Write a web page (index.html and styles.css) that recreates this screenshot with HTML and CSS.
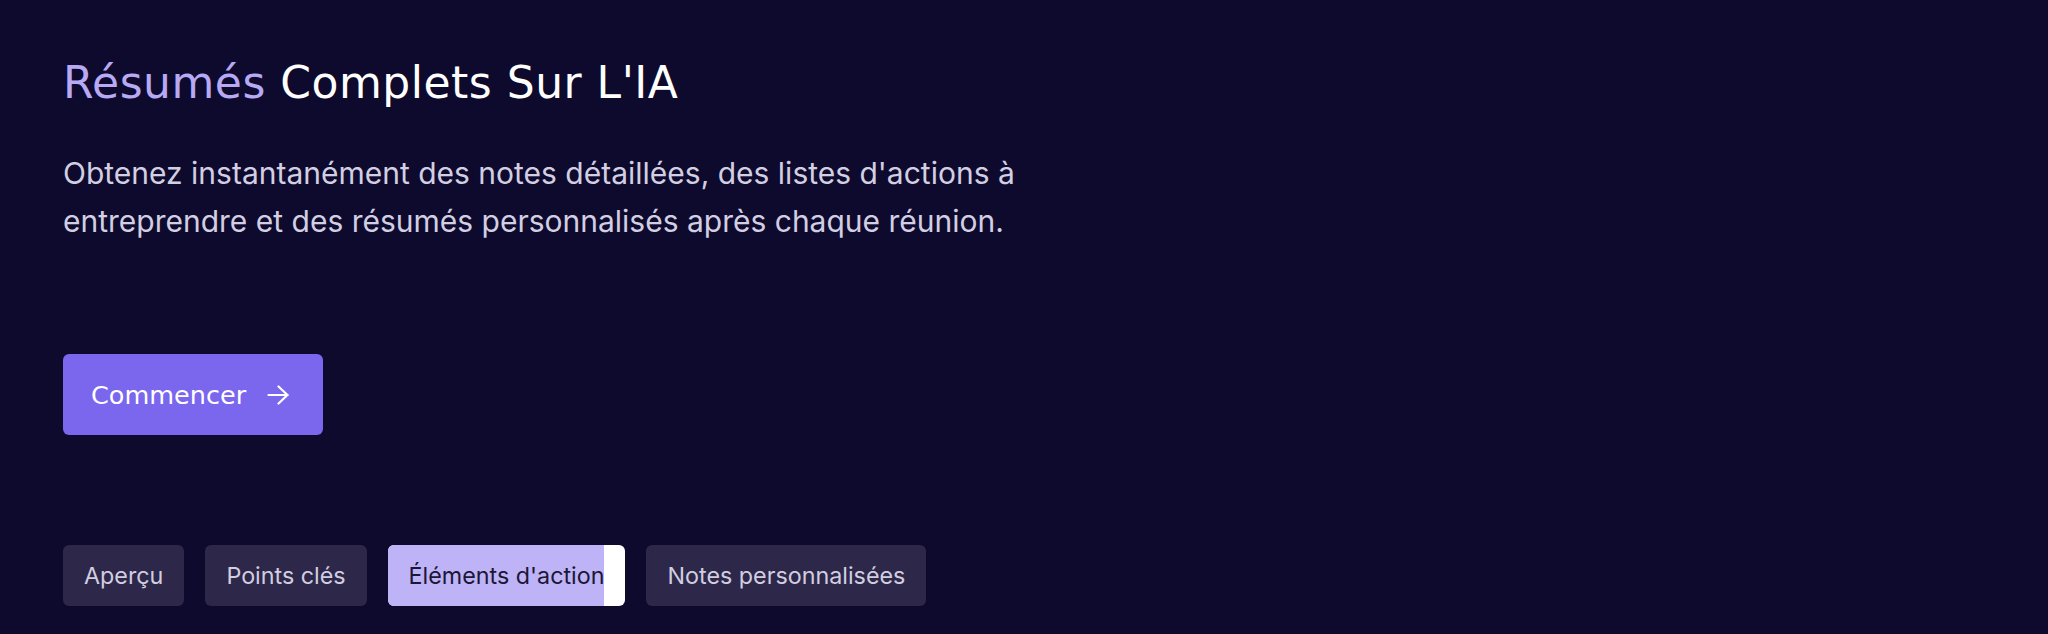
FILE: index.html
```html
<!DOCTYPE html>
<html lang="fr">
<head>
  <meta charset="UTF-8" />
  <title>Résumés Complets Sur L'IA</title>
  <meta name="viewport" content="width=device-width, initial-scale=1.0" />
  <link rel="stylesheet" href="styles.css">
</head>
<body>

  <section class="hero">
    <h1 class="hero-title"><span class="accent">Résumés</span> Complets Sur L'IA</h1>
    <p class="hero-text">Obtenez instantanément des notes détaillées, des listes d'actions à entreprendre et des résumés personnalisés après chaque réunion.</p>

    <a class="start-btn" href="#">
      Commencer
      <svg class="start-arrow" viewBox="0 0 22 20" width="22" height="20" fill="none" stroke="currentColor" stroke-width="2.2" stroke-linecap="round" stroke-linejoin="round">
        <path d="M1.5 10h19" />
        <path d="M11.5 1.5l9 8.5-9 8.5" />
      </svg>
    </a>

    <div class="tabs">
      <button class="tab">Aperçu</button>
      <button class="tab">Points clés</button>
      <button class="tab active"><span class="tab-fill" style="width: 91%"></span><span class="tab-label">Éléments d'action</span></button>
      <button class="tab">Notes personnalisées</button>
    </div>
  </section>

</body>
</html>
```

FILE: styles.css
```css
body {
  margin: 0;
  background-color: #0e0a2d;
  color: white;
  font-family: Inter, "Noto Sans", sans-serif;
  height: 634px;
  overflow: hidden;
}

.hero {
  padding: 57px 63px 0;
}

.hero-title {
  margin: 0;
  font-family: "DejaVu Sans", sans-serif;
  font-size: 44px;
  font-weight: 400;
  line-height: 52px;
  letter-spacing: 0.5px;
}

.hero-title .accent {
  color: #b7a9f4;
}

.hero-text {
  margin: 40px 0 0;
  max-width: 1040px;
  font-size: 30px;
  line-height: 48px;
  color: #d3cfe2;
}

.start-btn {
  display: inline-flex;
  align-items: center;
  gap: 21px;
  height: 81px;
  margin-top: 109px;
  padding: 0 34px 0 28px;
  box-sizing: border-box;
  background-color: #7b66ee;
  border-radius: 6px;
  color: white;
  font-family: "DejaVu Sans", sans-serif;
  font-size: 25.5px;
  text-decoration: none;
}

.tabs {
  display: flex;
  gap: 21px;
  margin-top: 110px;
}

.tab {
  position: relative;
  height: 61px;
  padding: 0 21px;
  border: none;
  border-radius: 6px;
  background-color: #2d2849;
  color: #d2cee0;
  font-family: Inter, sans-serif;
  font-size: 23.3px;
  overflow: hidden;
  cursor: pointer;
}

.tab.active {
  background-color: white;
  color: #1b1736;
}

.tab-fill {
  position: absolute;
  top: 0;
  left: 0;
  bottom: 0;
  background-color: #beb3f6;
}

.tab-label {
  position: relative;
}
```
